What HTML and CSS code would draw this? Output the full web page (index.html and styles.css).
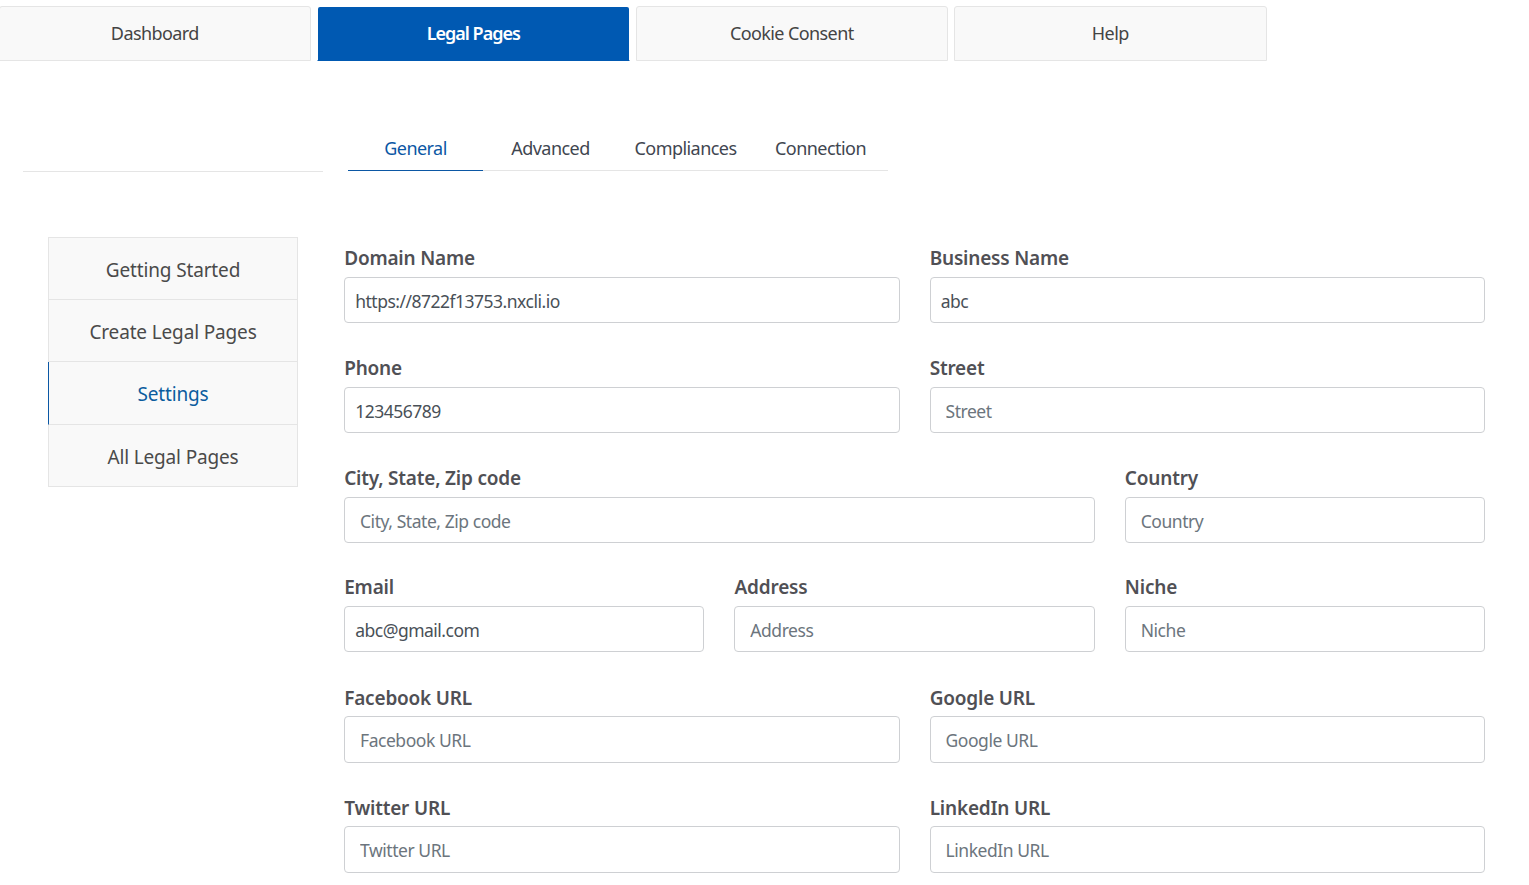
FILE: index.html
```html
<!DOCTYPE html>
<html lang="en">
<head>
<meta charset="utf-8">
<title>Legal Pages Settings</title>
<link rel="stylesheet" href="styles.css">
</head>
<body>
<nav class="top-tabs">
  <a class="top-tab first">Dashboard</a>
  <a class="top-tab active">Legal Pages</a>
  <a class="top-tab">Cookie Consent</a>
  <a class="top-tab">Help</a>
</nav>
<div class="sub-row">
  <div class="sub-spacer"></div>
  <nav class="sub-tabs">
    <a class="sub-tab active">General</a>
    <a class="sub-tab">Advanced</a>
    <a class="sub-tab">Compliances</a>
    <a class="sub-tab">Connection</a>
  </nav>
</div>
<main class="content">
  <aside class="side">
    <a class="side-item">Getting Started</a>
    <a class="side-item">Create Legal Pages</a>
    <a class="side-item active">Settings</a>
    <a class="side-item">All Legal Pages</a>
  </aside>
  <form class="form">
    <div class="field s6"><label>Domain Name</label><input class="filled" value="https://8722f13753.nxcli.io"></div>
    <div class="field s6"><label>Business Name</label><input class="filled" value="abc"></div>
    <div class="field s6"><label>Phone</label><input class="filled" value="123456789"></div>
    <div class="field s6"><label>Street</label><input placeholder="Street"></div>
    <div class="field s8"><label>City, State, Zip code</label><input placeholder="City, State, Zip code"></div>
    <div class="field s4"><label>Country</label><input placeholder="Country"></div>
    <div class="field s4 tight"><label>Email</label><input class="filled" value="abc@gmail.com"></div>
    <div class="field s4 tight"><label>Address</label><input placeholder="Address"></div>
    <div class="field s4 tight"><label>Niche</label><input placeholder="Niche"></div>
    <div class="field s6 url"><label>Facebook URL</label><input placeholder="Facebook URL"></div>
    <div class="field s6 url"><label>Google URL</label><input placeholder="Google URL"></div>
    <div class="field s6 url"><label>Twitter URL</label><input placeholder="Twitter URL"></div>
    <div class="field s6 url"><label>LinkedIn URL</label><input placeholder="LinkedIn URL"></div>
  </form>
</main>
</body>
</html>
```
FILE: styles.css
```css
* { box-sizing: border-box; }
html, body { margin: 0; height: 885px; overflow: hidden; background: #fff; }
body { font-family: "Noto Sans", "Open Sans", sans-serif; color: #4a4a4a; }

.top-tabs { display: flex; gap: 6px; padding-top: 6px; margin-left: -1.5px; }
.top-tab {
  width: 312.5px; height: 55px; display: flex; align-items: center; justify-content: center;
  background: #f9f9f9; border: 1px solid #e5e5e5; border-radius: 3px 3px 0 0;
  font-size: 18px; letter-spacing: -0.6px; color: #444; padding-bottom: 1px;
}
.top-tab.active {
  background: #0059b2; background-clip: padding-box; border-color: transparent;
  border-bottom-color: #0059b2; color: #fff; font-weight: 600; letter-spacing: -1px;
}

.sub-row { display: flex; margin-top: 61px; padding-left: 23px; height: 50px; }
.sub-spacer { width: 300px; height: 50px; border-bottom: 1px solid #e5e5e5; margin-right: 25px; }
.sub-tabs { display: flex; width: 540px; height: 49px; border-bottom: 1px solid #e5e5e5; }
.sub-tab { width: 135px; height: 49px; display: flex; align-items: center; justify-content: center; font-size: 18px; letter-spacing: -0.55px; color: #3f4650; padding-top: 4px; border-bottom: 1px solid transparent; }
.sub-tab.active { color: #0b57a4; border-bottom-color: #0b57a4; }

.content { display: flex; margin-top: 65px; padding-left: 48px; align-items: flex-start; }
.side { width: 250px; flex: none; border: 1px solid #e5e5e5; background: #f9f9f9; margin-right: 46px; }
.side-item { display: flex; align-items: center; justify-content: center; height: 62px; padding-top: 2px; font-size: 19px; letter-spacing: -0.15px; color: #4a4a4a; border-bottom: 1px solid #e5e5e5; }
.side-item:last-child { border-bottom: 0; height: 61px; }
.side-item.active { color: #0b5c9e; margin-left: -1px; border-left: 1px solid #0b57a4; height: 63px; }

.form { width: 1141px; display: grid; grid-template-columns: repeat(12, 1fr); column-gap: 30px; margin-top: 4px; }
.field { display: flex; flex-direction: column; height: 110px; }
.field.tight { margin-top: -1px; }
.s4 { grid-column: span 4; }
.s6 { grid-column: span 6; }
.s8 { grid-column: span 8; }
label { font-size: 19px; font-weight: 600; letter-spacing: -0.2px; color: #505055; line-height: 26px; height: 36px; padding: 4px 0 0 0.2px; flex: none; }
.url label { padding-top: 5px; }
input {
  width: 100%; height: 46px; border: 1px solid #ced0d3; border-radius: 4px; background: #fff;
  padding: 1px 15px 0; font: inherit; font-size: 17.5px; letter-spacing: -0.5px; color: #495057; outline: 0; flex: none;
}
.url input { height: 47px; }
input.filled { padding-left: 10.2px; }
input::placeholder { color: #6c757d; opacity: 1; letter-spacing: -0.45px; }
```
